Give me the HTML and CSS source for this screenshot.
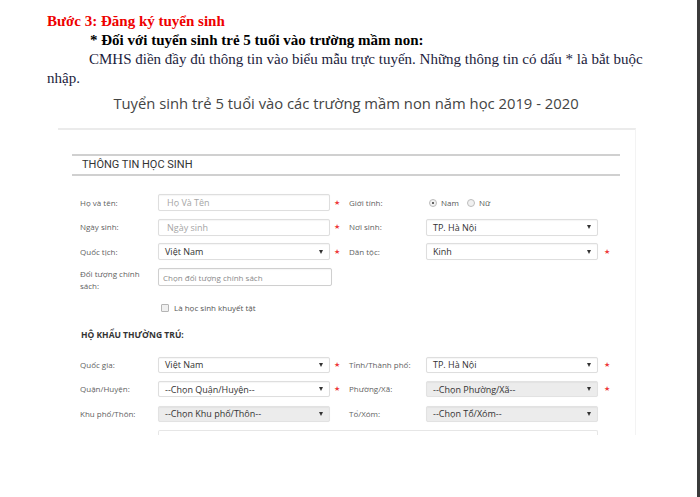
FILE: index.html
```html
<!DOCTYPE html>
<html lang="vi">
<head>
<meta charset="utf-8">
<title>Đăng ký tuyển sinh</title>
<link rel="stylesheet" href="styles.css">
</head>
<body>
<div class="page">
  <div class="doc">
    <p class="step">Bước 3: Đăng ký tuyển sinh</p>
    <p class="sub">* Đối với tuyển sinh trẻ 5 tuổi vào trường mầm non:</p>
    <p class="para">CMHS điền đầy đủ thông tin vào biểu mẫu trực tuyến. Những thông tin có dấu * là bắt buộc nhập.</p>
  </div>
  <h1 class="title">Tuyển sinh trẻ 5 tuổi vào các trường mầm non năm học 2019 - 2020</h1>
  <div class="panel">
    <div class="section-head">THÔNG TIN HỌC SINH</div>
    <div class="form">
      <div class="grid grid1">
        <div class="label">Họ và tên:</div>
        <div class="field"><span class="ph">Họ Và Tên</span></div>
        <div class="star">★</div>
        <div class="label">Giới tính:</div>
        <div class="radios">
          <span class="radio on"></span><span class="rtext">Nam</span>
          <span class="radio"></span><span class="rtext">Nữ</span>
        </div>
        <div></div>

        <div class="label">Ngày sinh:</div>
        <div class="field"><span class="ph">Ngày sinh</span></div>
        <div class="star">★</div>
        <div class="label">Nơi sinh:</div>
        <div class="field select"><span class="val">TP. Hà Nội</span><span class="arrow"></span></div>
        <div></div>

        <div class="label">Quốc tịch:</div>
        <div class="field select"><span class="val">Việt Nam</span><span class="arrow"></span></div>
        <div class="star">★</div>
        <div class="label">Dân tộc:</div>
        <div class="field select"><span class="val">Kinh</span><span class="arrow"></span></div>
        <div class="star star-r">★</div>

        <div class="label label-two">Đối tượng chính sách:</div>
        <div class="field field-tall"><span class="ph ph-small">Chọn đối tượng chính sách</span></div>
      </div>

      <div class="check"><span class="box"></span><span>Là học sinh khuyết tật</span></div>

      <div class="subhead">HỘ KHẨU THƯỜNG TRÚ:</div>

      <div class="grid grid2">
        <div class="label">Quốc gia:</div>
        <div class="field select"><span class="val">Việt Nam</span><span class="arrow"></span></div>
        <div class="star">★</div>
        <div class="label">Tỉnh/Thành phố:</div>
        <div class="field select"><span class="val">TP. Hà Nội</span><span class="arrow"></span></div>
        <div class="star star-r">★</div>

        <div class="label">Quận/Huyện:</div>
        <div class="field select"><span class="val">--Chọn Quận/Huyện--</span><span class="arrow"></span></div>
        <div class="star">★</div>
        <div class="label">Phường/Xã:</div>
        <div class="field select disabled"><span class="val">--Chọn Phường/Xã--</span><span class="arrow"></span></div>
        <div class="star star-r">★</div>

        <div class="label">Khu phố/Thôn:</div>
        <div class="field select disabled"><span class="val">--Chọn Khu phố/Thôn--</span><span class="arrow"></span></div>
        <div></div>
        <div class="label">Tổ/Xóm:</div>
        <div class="field select disabled"><span class="val">--Chọn Tổ/Xóm--</span><span class="arrow"></span></div>
        <div></div>

        <div class="addr-box"></div>
      </div>
    </div>
  </div>
</div>
</body>
</html>
```

FILE: styles.css
```css
html, body {
  margin: 0;
  padding: 0;
  background: #ffffff;
}

.page {
  width: 700px;
  height: 497px;
  box-sizing: border-box;
  border-right: 3px solid #3b3b3b;
  overflow: hidden;
  background: #ffffff;
}

.doc {
  padding: 12px 44px 0 47px;
  font-family: "Liberation Serif", "Times New Roman", serif;
  font-size: 15px;
  line-height: 19px;
}

.doc p {
  margin: 0;
}

.step {
  color: #ee0000;
  font-weight: bold;
}

.sub {
  font-weight: bold;
  color: #000000;
  padding-left: 43px;
}

.para {
  text-indent: 42px;
  color: #1c1c3c;
}

.title {
  margin: 5px 0 0 0;
  width: 692px;
  text-align: center;
  font-family: "Open Sans", sans-serif;
  font-weight: normal;
  font-size: 14.8px;
  line-height: 20px;
  color: #444444;
}

.panel {
  margin: 15px 0 0 58px;
  width: 577px;
  height: 305px;
  overflow: hidden;
  border-top: 2px solid #ebebeb;
  border-right: 1px solid #f3f3f3;
  font-family: "Open Sans", sans-serif;
}

.section-head {
  margin: 24px 15px 0 14px;
  border-top: 2px solid #d0d0d0;
  border-bottom: 2px solid #d0d0d0;
  height: 18px;
  line-height: 18px;
  padding-left: 10px;
  font-family: Roboto, "Open Sans", sans-serif;
  font-size: 11px;
  color: #333333;
}

.form {
  padding: 18px 0 0 22px;
}

.grid {
  display: grid;
  grid-template-columns: 78px 172px 19px 77px 172px 24px;
  align-items: center;
}

.grid1 {
  grid-template-rows: 17px 17px 17px 24px;
  row-gap: 7.5px;
}

.grid2 {
  margin-top: 16px;
  grid-template-rows: 16px 16px 16px 20px;
  row-gap: 8.5px;
}

.label {
  font-size: 8px;
  line-height: 12px;
  color: #5f5f5f;
  white-space: nowrap;
}

.label-two {
  white-space: normal;
  width: 70px;
  align-self: start;
}

.field {
  box-sizing: border-box;
  height: 100%;
  border: 1px solid #dedede;
  border-radius: 2px;
  box-shadow: inset 0 1px 1px rgba(0, 0, 0, 0.04), 0 0 1px rgba(0, 0, 0, 0.06);
  background: #ffffff;
  display: flex;
  align-items: center;
  padding: 0 6px 0 8px;
  font-size: 9px;
}

.field-tall {
  height: 18px;
  align-self: start;
  margin-top: 0.5px;
  width: 174px;
  padding-left: 4px;
  border-color: #cfcfcf;
}

.select {
  padding-left: 6px;
  justify-content: space-between;
}

.disabled {
  background: #ececec;
  border-color: #e2e2e2;
}

.ph {
  color: #a5a5a5;
}

.ph-small {
  font-size: 8px;
  color: #8a8a8a;
}

.val {
  color: #333333;
}

.arrow {
  width: 0;
  height: 0;
  border-left: 2.5px solid transparent;
  border-right: 2.5px solid transparent;
  border-top: 4px solid #333333;
}

.star {
  color: #ee3b3b;
  font-size: 7px;
  padding-left: 4px;
  font-family: "DejaVu Sans", sans-serif;
}

.star-r {
  padding-left: 6px;
}

.radios {
  display: flex;
  align-items: center;
  padding-left: 3px;
  font-size: 8px;
  color: #555555;
}

.radio {
  width: 6px;
  height: 6px;
  border: 1px solid #bdbdbd;
  border-radius: 50%;
  background: #f1f1f1;
  position: relative;
  margin-right: 4px;
}

.radio.on::after {
  content: "";
  position: absolute;
  left: 2px;
  top: 2px;
  width: 2px;
  height: 2px;
  border-radius: 50%;
  background: #333333;
}

.rtext {
  margin-right: 8px;
}

.check {
  margin-top: 10px;
  padding-left: 81px;
  display: flex;
  align-items: center;
  height: 12px;
  font-size: 8px;
  color: #555555;
}

.box {
  width: 6px;
  height: 6px;
  border: 1px solid #b5b5b5;
  border-radius: 1px;
  background: #f0f0f0;
  margin-right: 5px;
}

.subhead {
  margin-top: 15px;
  padding-left: 1px;
  line-height: 12px;
  font-size: 8.5px;
  font-weight: bold;
  color: #333333;
}

.addr-box {
  grid-column: 2 / 6;
  align-self: stretch;
  border: 1px solid #e6e6e6;
  border-bottom: none;
  border-radius: 2px 2px 0 0;
}
```
